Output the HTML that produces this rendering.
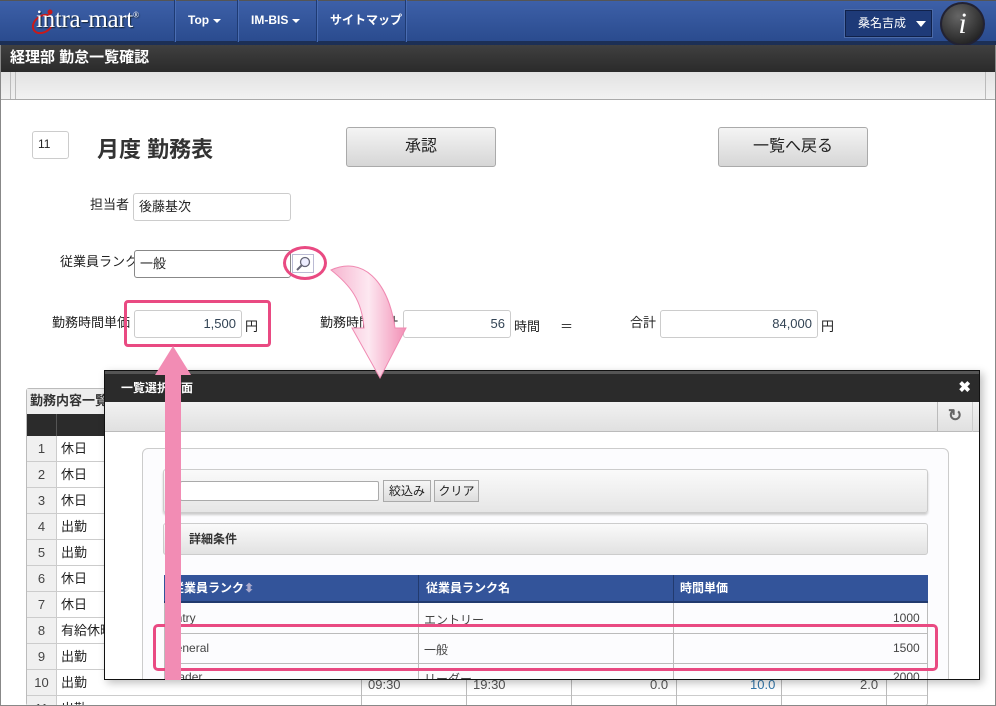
<!DOCTYPE html>
<html style="width:996px;height:706px;overflow:hidden"><head><meta charset="utf-8">
<style>
*{box-sizing:border-box;margin:0;padding:0}
body{width:996px;height:706px;overflow:hidden;background:#fff;font-family:"Liberation Sans","Noto Sans CJK JP",sans-serif;font-size:13px;color:#222;position:relative}
.a{position:absolute}
.inp{position:absolute;border:1px solid #ccc;border-radius:3px;background:#fff;font-size:13px;padding:0 5px;line-height:25px}
.btn{position:absolute;border:1px solid #aaa;border-radius:3px;background:linear-gradient(#f4f4f4,#d6d6d6);text-align:center;font-size:16px;line-height:37px;color:#222}
.nav{position:absolute;top:0;height:42px;color:#fff;font-weight:bold;font-size:12px;line-height:40px;border-left:1px solid #1e3a72;box-shadow:inset 1px 0 0 #4a6db3}
.tri{display:inline-block;border-left:4px solid transparent;border-right:4px solid transparent;border-top:4px solid #fff;vertical-align:middle;margin-left:4px}
.row{position:absolute;left:27px;height:26px;border-bottom:1px solid #ccc;width:900px}
.row .n{position:absolute;left:0;width:30px;height:25px;background:#f0f0f0;border-right:1px solid #ccc;text-align:center;line-height:25px;color:#444}
.row .t{position:absolute;left:34px;line-height:25px}
</style></head><body>
<div class="a" style="left:0;top:0;width:996px;height:42px;background:linear-gradient(#3d60a8,#2a4b8e);border-top:1px solid #555"></div>
<div class="a" style="left:0;top:41px;width:996px;height:4px;background:#1c2f55"></div>
<svg class="a" style="left:30px;top:5px" width="30" height="32"><ellipse cx="13" cy="19" rx="11" ry="8" fill="none" stroke="#c81a1a" stroke-width="2" transform="rotate(-35 13 19)"/><circle cx="20" cy="7" r="2.5" fill="#c81a1a"/></svg>
<div class="a" style="left:36px;top:6px;font-family:'Liberation Serif',serif;font-size:25px;color:#fff;letter-spacing:-0.3px;text-shadow:1px 1px 1px #123">intra-mart<sup style="font-size:8px">®</sup></div>
<div class="nav" style="left:174px;width:63px;padding-left:13px">Top<span class="tri"></span></div>
<div class="nav" style="left:237px;width:79px;padding-left:13px">IM-BIS<span class="tri"></span></div>
<div class="nav" style="left:316px;width:89px;padding-left:13px">サイトマップ</div>
<div class="nav" style="left:405px;width:2px"></div>
<div class="a" style="left:845px;top:10px;width:87px;height:27px;background:#1e3a78;border:1px solid #10214a;box-shadow:0 0 0 1px #4b6aa8;color:#fff;font-size:12px;line-height:25px;padding-left:12px">桑名吉成<span class="tri" style="margin-left:10px;border-width:6px 5px 0 5px"></span></div>
<div class="a" style="left:940px;top:2px;width:45px;height:44px;border-radius:50%;background:radial-gradient(circle at 40% 30%,#666,#111);border:2px solid #223;color:#fff;font-family:'Liberation Serif',serif;font-style:italic;font-size:30px;text-align:center;line-height:40px">i</div>
<div class="a" style="left:0;top:45px;width:996px;height:27px;background:linear-gradient(#404040,#2a2a2a);color:#fff;font-weight:bold;font-size:15px;line-height:26px;padding-left:10px">経理部 勤怠一覧確認</div>
<div class="a" style="left:0;top:72px;width:996px;height:28px;background:linear-gradient(#e2e2e2,#f2f2f2);border-bottom:1px solid #aaa"></div>
<div class="a" style="left:10px;top:72px;width:6px;height:27px;border-left:1px solid #bbb;border-right:1px solid #bbb"></div>
<div class="a" style="left:985px;top:72px;width:1px;height:27px;background:#bbb"></div>
<div class="a" style="left:0;top:45px;width:1px;height:661px;background:#888"></div>
<div class="a" style="left:995px;top:45px;width:1px;height:661px;background:#888"></div>
<div class="inp" style="left:32px;top:131px;width:37px;height:28px;font-size:12px">11</div>
<div class="a" style="left:97px;top:132px;font-size:22px;font-weight:bold;color:#333">月度 勤務表</div>
<div class="btn" style="left:346px;top:127px;width:150px;height:40px">承認</div>
<div class="btn" style="left:718px;top:127px;width:150px;height:40px">一覧へ戻る</div>
<div class="a" style="left:90px;top:194px">担当者</div>
<div class="inp" style="left:133px;top:193px;width:158px;height:28px">後藤基次</div>
<div class="a" style="left:60px;top:251px">従業員ランク</div>
<div class="inp" style="left:134px;top:250px;width:157px;height:28px;border-color:#888">一般</div>
<svg class="a" style="left:292px;top:254px" width="22" height="19"><rect x="0.5" y="0.5" width="21" height="18" fill="none" stroke="#77a" stroke-dasharray="1 1"/><circle cx="13" cy="8" r="4.5" fill="#eef" stroke="#667" stroke-width="1.3"/><path d="M10 11 L5 16" stroke="#667" stroke-width="2"/></svg>
<div class="a" style="left:283px;top:246px;width:44px;height:34px;border:3px solid #e94a82;border-radius:50%"></div>
<div class="a" style="left:52px;top:312px">勤務時間単価</div>
<div class="inp" style="left:134px;top:310px;width:108px;height:28px;text-align:right;color:#345">1,500</div>
<div class="a" style="left:245px;top:316px">円</div>
<div class="a" style="left:124px;top:300px;width:147px;height:47px;border:3px solid #e94a82;border-radius:4px"></div>
<div class="a" style="left:320px;top:312px">勤務時間合計</div>
<div class="inp" style="left:403px;top:310px;width:108px;height:28px;text-align:right;color:#345">56</div>
<div class="a" style="left:514px;top:316px">時間</div>
<div class="a" style="left:560px;top:316px">＝</div>
<div class="a" style="left:630px;top:312px">合計</div>
<div class="inp" style="left:660px;top:310px;width:158px;height:28px;text-align:right;color:#345">84,000</div>
<div class="a" style="left:821px;top:316px">円</div>
<div class="a" style="left:26px;top:388px;width:902px;height:318px;border:1px solid #bbb;border-radius:3px;background:#fff"></div>
<div class="a" style="left:27px;top:389px;width:300px;height:26px;background:#eee;font-weight:bold;line-height:24px;padding-left:3px;color:#333">勤務内容一覧</div>
<div class="a" style="left:27px;top:414px;width:900px;height:22px;background:#2b2b2b"></div>
<div class="a" style="left:56px;top:414px;width:1px;height:22px;background:#555"></div>
<div class="row" style="top:436px"><span class="n">1</span><span class="t">休日</span></div>
<div class="row" style="top:462px"><span class="n">2</span><span class="t">休日</span></div>
<div class="row" style="top:488px"><span class="n">3</span><span class="t">休日</span></div>
<div class="row" style="top:514px"><span class="n">4</span><span class="t">出勤</span></div>
<div class="row" style="top:540px"><span class="n">5</span><span class="t">出勤</span></div>
<div class="row" style="top:566px"><span class="n">6</span><span class="t">休日</span></div>
<div class="row" style="top:592px"><span class="n">7</span><span class="t">休日</span></div>
<div class="row" style="top:618px"><span class="n">8</span><span class="t">有給休暇</span></div>
<div class="row" style="top:644px"><span class="n">9</span><span class="t">出勤</span></div>
<div class="row" style="top:670px"><span class="n">10</span><span class="t">出勤</span></div>
<div class="row" style="top:696px"><span class="n">11</span><span class="t">出勤</span></div>
<div class="a" style="left:361px;top:670px;width:1px;height:36px;background:#bbb"></div>
<div class="a" style="left:466px;top:670px;width:1px;height:36px;background:#bbb"></div>
<div class="a" style="left:571px;top:670px;width:1px;height:36px;background:#bbb"></div>
<div class="a" style="left:676px;top:670px;width:1px;height:36px;background:#bbb"></div>
<div class="a" style="left:781px;top:670px;width:1px;height:36px;background:#bbb"></div>
<div class="a" style="left:886px;top:670px;width:1px;height:36px;background:#bbb"></div>
<div class="a" style="left:368px;top:677px;color:#555">09:30</div>
<div class="a" style="left:473px;top:677px;color:#555">19:30</div>
<div class="a" style="left:650px;top:677px;color:#555">0.0</div>
<div class="a" style="left:750px;top:677px;color:#37a">10.0</div>
<div class="a" style="left:860px;top:677px;color:#555">2.0</div>
<div class="a" style="left:0;top:705px;width:996px;height:1px;background:#888"></div>
<div class="a" style="left:104px;top:370px;width:876px;height:310px;border:1px solid #111;background:#fff;box-shadow:3px 3px 8px rgba(0,0,0,.25);overflow:hidden">
 <div class="a" style="left:0;top:0;width:874px;height:31px;background:#2b2b2b;border-top:3px solid #555;color:#fff;font-weight:bold;font-size:12px;line-height:28px;padding-left:16px">一覧選択画面<span style="position:absolute;right:8px;font-size:15px">✖</span></div>
 <div class="a" style="left:0;top:31px;width:874px;height:30px;background:linear-gradient(#f2f2f2,#e0e0e0);border-bottom:1px solid #bbb"></div>
 <div class="a" style="left:832px;top:31px;width:36px;height:30px;border-left:1px solid #bbb;border-right:1px solid #ccc;color:#666;font-size:17px;font-weight:bold;text-align:center;line-height:28px">↻</div>
 <div class="a" style="left:37px;top:77px;width:807px;height:240px;border:1px solid #ccc;border-radius:6px;background:#fcfcfe"></div>
 <div class="a" style="left:58px;top:98px;width:765px;height:44px;border:1px solid #ccc;border-radius:3px;background:linear-gradient(#fafafa,#e6e6e6);box-shadow:0 2px 2px #ccc"></div>
 <div class="a" style="left:75px;top:110px;width:199px;height:20px;border:1px solid #aaa;border-radius:2px;background:#fff"></div>
 <div class="a" style="left:278px;top:109px;width:48px;height:22px;border:1px solid #aaa;background:linear-gradient(#f6f6f6,#ddd);font-size:12px;text-align:center;line-height:20px">絞込み</div>
 <div class="a" style="left:329px;top:109px;width:45px;height:22px;border:1px solid #aaa;background:linear-gradient(#f6f6f6,#ddd);font-size:12px;text-align:center;line-height:20px">クリア</div>
 <div class="a" style="left:58px;top:152px;width:765px;height:32px;border:1px solid #ccc;border-radius:3px;background:linear-gradient(#fafafa,#e2e2e2);font-weight:bold;font-size:12px;line-height:30px;padding-left:25px;color:#333">詳細条件</div>
 <div class="a" style="left:59px;top:204px;width:764px;height:28px;background:#33549a;border-bottom:2px solid #223a6e;color:#fff;font-weight:bold;font-size:12px;line-height:26px">
  <span class="a" style="left:8px">従業員ランク<span style="color:#aac">⬍</span></span>
  <span class="a" style="left:254px;top:0;width:1px;height:26px;background:#223a6e"></span>
  <span class="a" style="left:262px">従業員ランク名</span>
  <span class="a" style="left:509px;top:0;width:1px;height:26px;background:#223a6e"></span>
  <span class="a" style="left:516px">時間単価</span>
 </div>
 <div class="a" style="left:59px;top:232px;width:764px;height:90px;border-left:1px solid #bbb;border-right:1px solid #bbb"></div>
 <div class="a" style="left:313px;top:232px;width:1px;height:90px;background:#bbb"></div>
 <div class="a" style="left:568px;top:232px;width:1px;height:90px;background:#bbb"></div>
 <div class="a" style="left:59px;top:262px;width:764px;height:1px;background:#bbb"></div>
 <div class="a" style="left:59px;top:292px;width:764px;height:1px;background:#bbb"></div>
 <div class="a" style="left:64px;top:240px;color:#444;font-size:12px">entry</div>
 <div class="a" style="left:319px;top:240px;color:#444;font-size:12px">エントリー</div>
 <div class="a" style="left:788px;top:240px;color:#444;font-size:12px">1000</div>
 <div class="a" style="left:64px;top:270px;color:#444;font-size:12px">general</div>
 <div class="a" style="left:319px;top:270px;color:#444;font-size:12px">一般</div>
 <div class="a" style="left:788px;top:270px;color:#444;font-size:12px">1500</div>
 <div class="a" style="left:64px;top:299px;color:#444;font-size:12px">leader</div>
 <div class="a" style="left:319px;top:299px;color:#444;font-size:12px">リーダー</div>
 <div class="a" style="left:788px;top:299px;color:#444;font-size:12px">2000</div>
</div>
<div class="a" style="left:153px;top:624px;width:785px;height:47px;border:3px solid #e94a82;border-radius:5px"></div>
<svg class="a" style="left:0;top:0" width="996" height="706">
<defs><linearGradient id="g" x1="0" x2="1"><stop offset="0" stop-color="#f6b4cf"/><stop offset="0.5" stop-color="#fde8f1"/><stop offset="1" stop-color="#f28fb5"/></linearGradient></defs>
<path d="M165 680 L165 375 L155 375 L173 346 L191 375 L181 375 L181 680 Z" fill="#f28cb4"/>
<path d="M331 270 C362 256 388 280 395 328 L406 328 L380 378 L352 328 L364 328 C362 300 350 285 331 270 Z" fill="url(#g)" stroke="#f08ab2" stroke-width="1"/>
</svg>
</body></html>
